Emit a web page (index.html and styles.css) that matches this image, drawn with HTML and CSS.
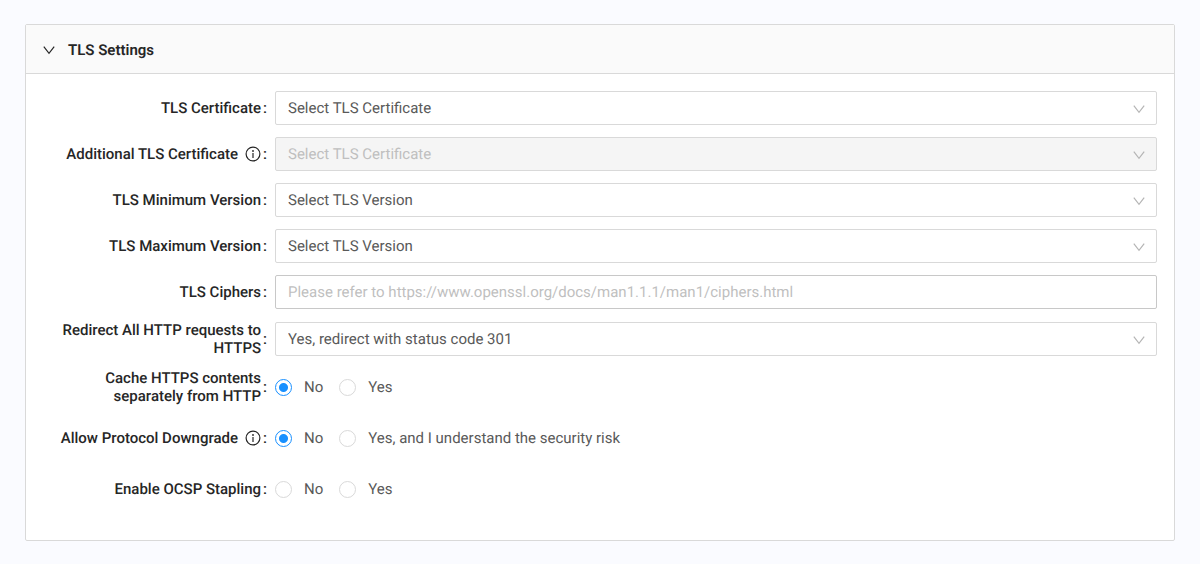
FILE: index.html
```html
<!DOCTYPE html>
<html lang="en">
<head>
<meta charset="utf-8">
<meta name="viewport" content="width=device-width, initial-scale=1">
<title>TLS Settings</title>
<link rel="stylesheet" href="styles.css">
</head>
<body>
<svg class="sprite" aria-hidden="true">
  <symbol id="chevron" viewBox="0 0 12 12"><path d="M.8 2.7 6 9.3l5.2-6.6" fill="none" stroke="currentColor" stroke-width="1.2"/></symbol>
  <symbol id="info" viewBox="0 0 16 16"><circle cx="8" cy="8" r="6.9" fill="none" stroke="currentColor" stroke-width="1.2"/><circle cx="8" cy="5" r=".9" fill="currentColor"/><path d="M8 7v5" stroke="currentColor" stroke-width="1.2"/></symbol>
</svg>
<main class="page">
  <section class="panel">
    <button class="panel-header" type="button" aria-expanded="true">
      <svg class="panel-arrow" aria-hidden="true"><use href="#chevron"/></svg>
      <span>TLS Settings</span>
    </button>
    <form class="form">
      <div class="row">
        <div class="label"><label for="cert">TLS Certificate</label></div>
        <div class="select"><select id="cert"><option>Select TLS Certificate</option></select><svg class="select-arrow" aria-hidden="true"><use href="#chevron"/></svg></div>
      </div>
      <div class="row">
        <div class="label"><label for="extra">Additional TLS Certificate</label><svg class="info" aria-hidden="true"><use href="#info"/></svg></div>
        <div class="select"><select id="extra" disabled><option>Select TLS Certificate</option></select><svg class="select-arrow" aria-hidden="true"><use href="#chevron"/></svg></div>
      </div>
      <div class="row">
        <div class="label"><label for="min">TLS Minimum Version</label></div>
        <div class="select"><select id="min"><option>Select TLS Version</option></select><svg class="select-arrow" aria-hidden="true"><use href="#chevron"/></svg></div>
      </div>
      <div class="row">
        <div class="label"><label for="max">TLS Maximum Version</label></div>
        <div class="select"><select id="max"><option>Select TLS Version</option></select><svg class="select-arrow" aria-hidden="true"><use href="#chevron"/></svg></div>
      </div>
      <div class="row">
        <div class="label"><label for="ciphers">TLS Ciphers</label></div>
        <input class="text" id="ciphers" type="text" placeholder="Please refer to https://www.openssl.org/docs/man1.1.1/man1/ciphers.html">
      </div>
      <div class="row">
        <div class="label"><label for="redirect">Redirect All HTTP requests to HTTPS</label></div>
        <div class="select"><select id="redirect"><option>Yes, redirect with status code 301</option></select><svg class="select-arrow" aria-hidden="true"><use href="#chevron"/></svg></div>
      </div>
      <div class="radio-rows">
        <div class="row" role="radiogroup" aria-labelledby="cache-label">
          <div class="label"><span id="cache-label">Cache HTTPS contents separately from HTTP</span></div>
          <div class="radios">
            <label><input type="radio" name="cache" checked>No</label>
            <label><input type="radio" name="cache">Yes</label>
          </div>
        </div>
        <div class="row" role="radiogroup" aria-labelledby="downgrade-label">
          <div class="label"><span id="downgrade-label">Allow Protocol Downgrade</span><svg class="info" aria-hidden="true"><use href="#info"/></svg></div>
          <div class="radios">
            <label><input type="radio" name="downgrade" checked>No</label>
            <label><input type="radio" name="downgrade">Yes, and I understand the security risk</label>
          </div>
        </div>
        <div class="row" role="radiogroup" aria-labelledby="ocsp-label">
          <div class="label"><span id="ocsp-label">Enable OCSP Stapling</span></div>
          <div class="radios">
            <label><input type="radio" name="ocsp">No</label>
            <label><input type="radio" name="ocsp">Yes</label>
          </div>
        </div>
      </div>
    </form>
  </section>
</main>
</body>
</html>
```
FILE: styles.css
```css
* { box-sizing: border-box; }
body {
  margin: 0;
  background: #fafbff;
  color: #595959;
  font: 15px/18px Roboto, sans-serif;
  text-rendering: geometricPrecision;
}
.sprite { display: none; }
.page { padding: 24px 25px 0; }
.panel {
  background: #fff;
  border: 1px solid #d9d9d9;
  border-radius: 2px;
}
.panel-header {
  display: flex;
  align-items: center;
  gap: 13px;
  width: 100%;
  height: 49px;
  padding: 1px 17px 0;
  border: 0;
  border-bottom: 1px solid #d9d9d9;
  background: #fafafa;
  color: #262626;
  font: 600 15px/18px Roboto, sans-serif;
  text-rendering: inherit;
}
.panel-arrow { width: 12px; height: 12px; }
.form {
  display: flex;
  flex-direction: column;
  gap: 12px;
  padding: 17px 17px 33px 32px;
}
.row {
  display: grid;
  grid-template-columns: 209px 1fr;
  align-items: center;
  gap: 8px;
}
.label {
  display: flex;
  align-items: center;
  justify-content: flex-end;
  color: #262626;
  font-weight: 500;
  text-align: right;
}
.label::after {
  content: ":";
  padding-left: 2px;
}
.info {
  flex: none;
  width: 16px;
  height: 16px;
  margin-left: 7px;
}
.select { position: relative; }
.select select,
.text {
  display: block;
  width: 100%;
  height: 34px;
  margin: 0;
  padding: 0 12px;
  border: 1px solid #d9d9d9;
  border-radius: 2px;
  background: #fff;
  color: #595959;
  font: inherit;
  text-rendering: inherit;
}
.select select {
  appearance: none;
  padding-right: 32px;
}
.select select:disabled {
  background: #f5f5f5;
  color: #bfbfbf;
  opacity: 1;
}
.text { border-color: #c8c8c8; }
.text::placeholder { color: #bfbfbf; }
.select-arrow {
  position: absolute;
  top: 12px;
  right: 12px;
  width: 12px;
  height: 12px;
  color: #b5b5b5;
  pointer-events: none;
}
.radio-rows {
  display: flex;
  flex-direction: column;
  gap: 15px;
}
.radio-rows .row { min-height: 36px; }
.radios { display: flex; gap: 16px; }
.radios label {
  display: flex;
  align-items: center;
  gap: 12px;
}
.radios input {
  appearance: none;
  width: 17px;
  height: 17px;
  margin: 0;
  border: 1px solid #d9d9d9;
  border-radius: 50%;
  background: #fff;
}
.radios input:checked {
  border-color: #1890ff;
  background: radial-gradient(circle, #1890ff 4px, #fff 5px);
}
```
